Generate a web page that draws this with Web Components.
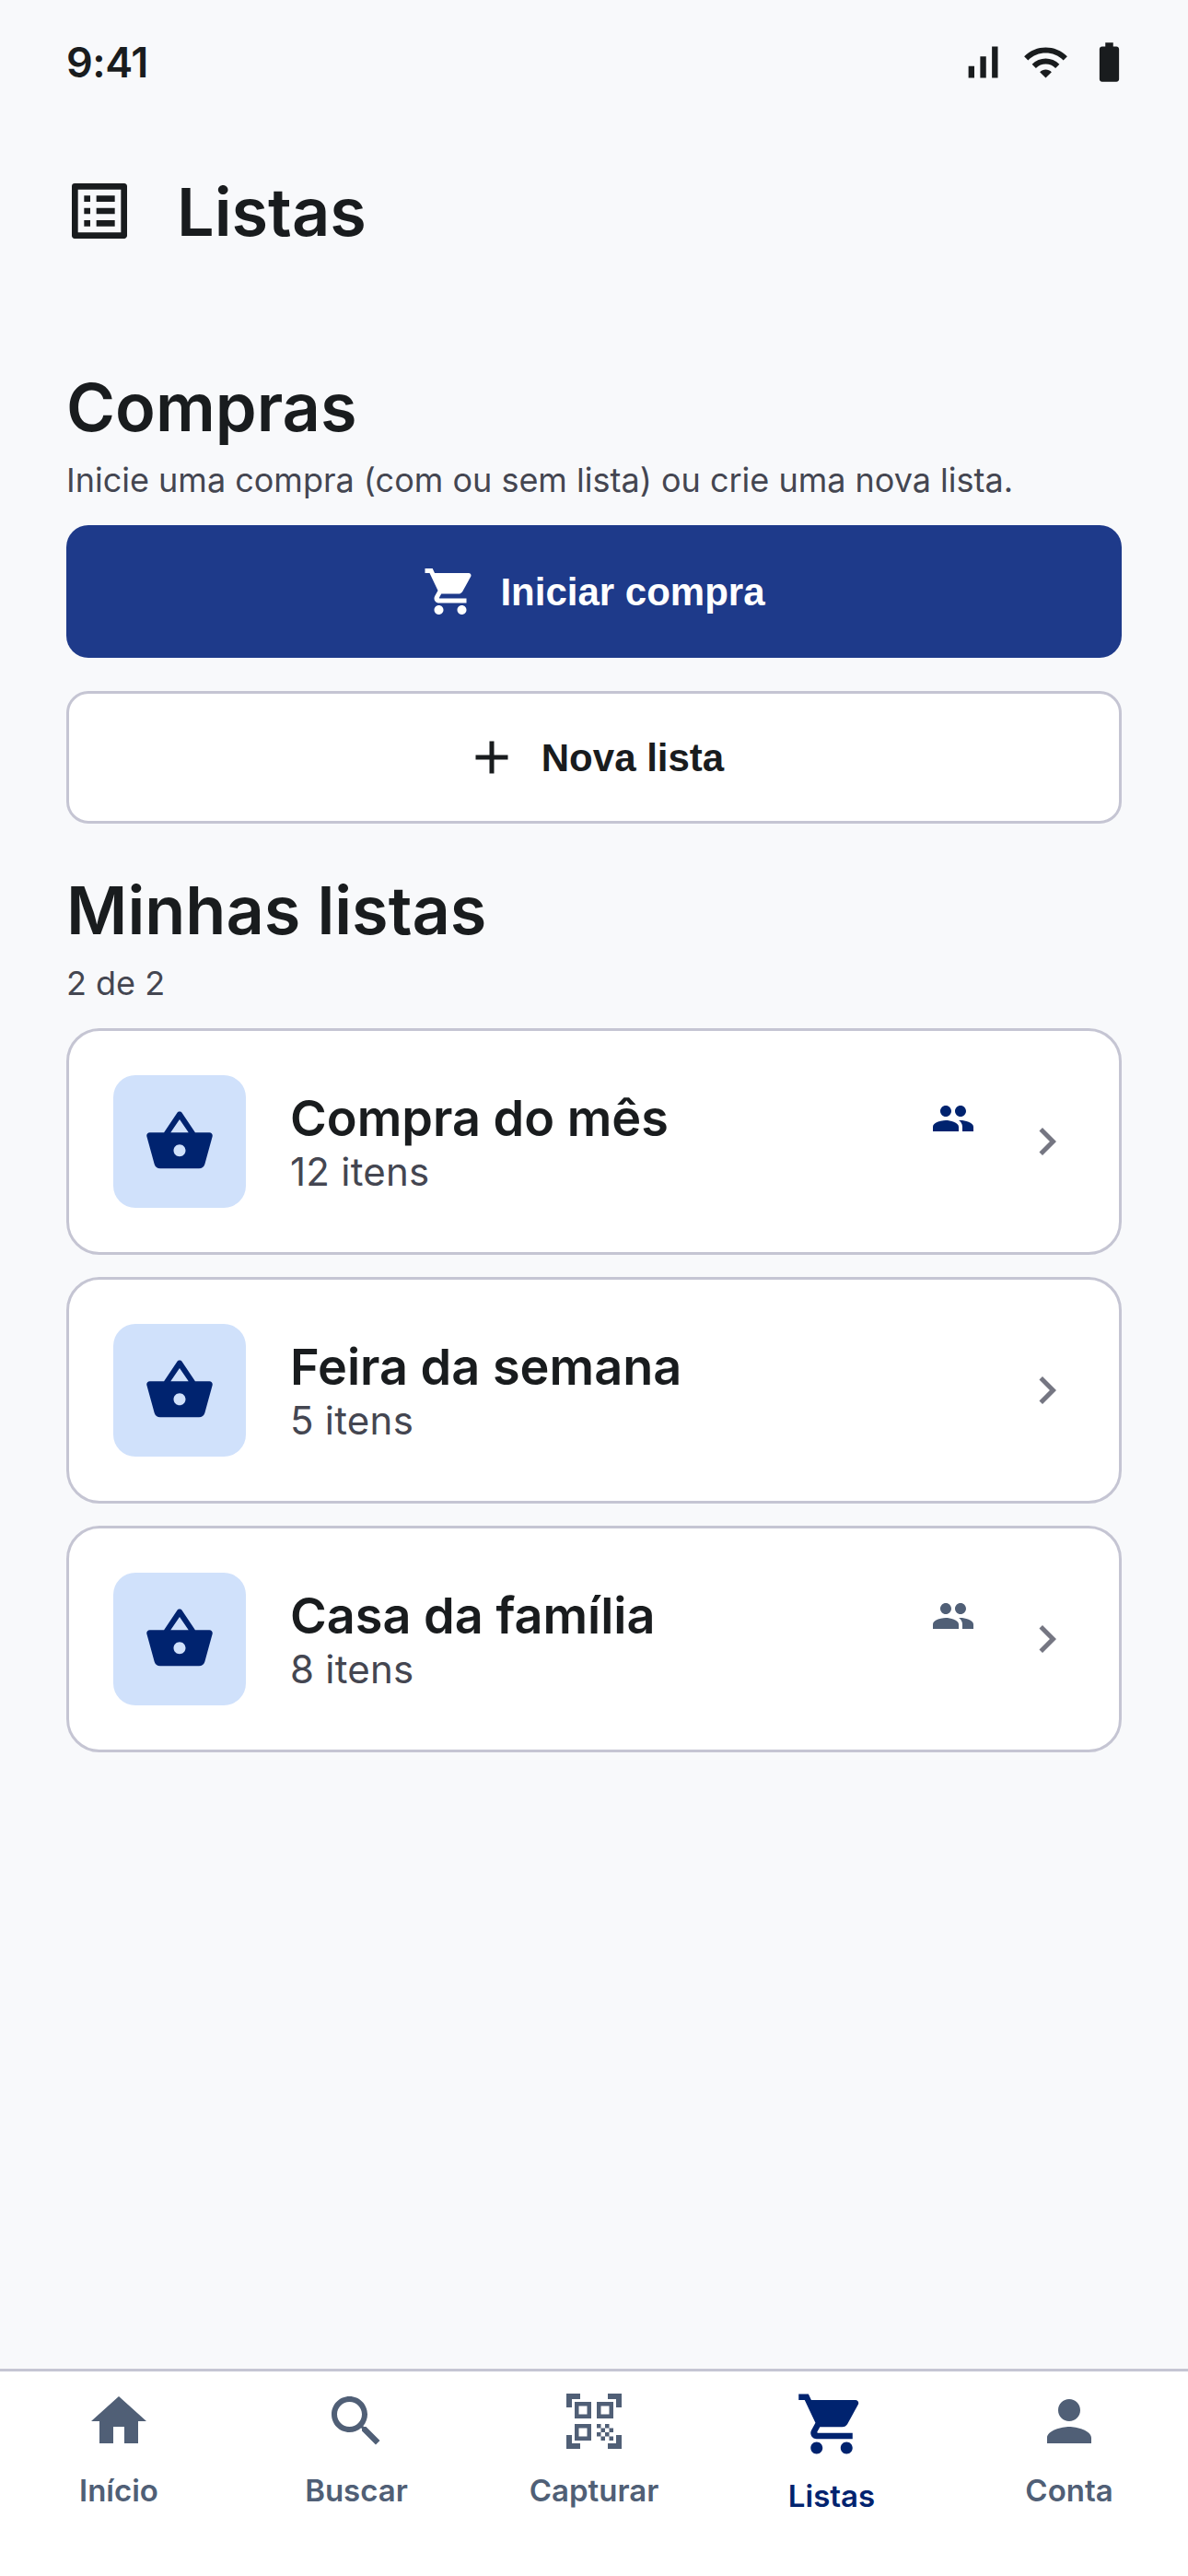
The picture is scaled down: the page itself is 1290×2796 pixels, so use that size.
<!DOCTYPE html>
<html lang="pt-BR">
<head>
<meta charset="utf-8">
<title>Listas</title>
<style>
    html, body { margin: 0; padding: 0; }
    body {
        background: #f8f9fb;
        color: #191c1e;
        font-family: Inter, "Noto Sans", sans-serif;
    }
    .page {
        display: flex;
        flex-direction: column;
        min-height: 2796px;
    }
    main {
        flex: 1;
        display: flex;
        flex-direction: column;
        padding: 0 72px;
    }
</style>
</head>
<body>
<div class="page">
    <status-bar></status-bar>
    <app-header>Listas</app-header>
    <main>
        <section-head sub="Inicie uma compra (com ou sem lista) ou crie uma nova lista.">Compras</section-head>
        <action-button icon="cart" kind="primary">Iniciar compra</action-button>
        <action-button icon="add">Nova lista</action-button>
        <section-head class="second" sub="2 de 2">Minhas listas</section-head>
        <list-card shared="primary"><span slot="title">Compra do mês</span><span slot="meta">12 itens</span></list-card>
        <list-card><span slot="title">Feira da semana</span><span slot="meta">5 itens</span></list-card>
        <list-card shared="secondary"><span slot="title">Casa da família</span><span slot="meta">8 itens</span></list-card>
    </main>
    <bottom-nav>
        <nav-item icon="home">Início</nav-item>
        <nav-item icon="search">Buscar</nav-item>
        <nav-item icon="qr">Capturar</nav-item>
        <nav-item icon="cart" active>Listas</nav-item>
        <nav-item icon="person">Conta</nav-item>
    </bottom-nav>
</div>

<script>
const ICONS = {
    signal: 'M17 4h3v16h-3zM5 14h3v6H5zm6-5h3v11h-3z',
    wifi: 'M1 9l2 2c4.97-4.97 13.03-4.97 18 0l2-2C16.93 2.93 7.08 2.93 1 9zm8 8l3 3 3-3c-1.65-1.66-4.34-1.66-6 0zm-4-4l2 2c2.76-2.76 7.24-2.76 10 0l2-2C15.14 9.14 8.87 9.14 5 13z',
    battery: 'M15.67 4H14V2h-4v2H8.33C7.6 4 7 4.6 7 5.33v15.33C7 21.4 7.6 22 8.33 22h7.33c.74 0 1.34-.6 1.34-1.33V5.33C17 4.6 16.4 4 15.67 4z',
    list: 'M19 5v14H5V5h14m1.1-2H3.9c-.5 0-.9.4-.9.9v16.2c0 .4.4.9.9.9h16.2c.4 0 .9-.5.9-.9V3.9c0-.5-.5-.9-.9-.9zM11 7h6v2h-6V7zm0 4h6v2h-6v-2zm0 4h6v2h-6zM7 7h2v2H7zm0 4h2v2H7zm0 4h2v2H7z',
    cart: 'M7 18c-1.1 0-1.99.9-1.99 2S5.9 22 7 22s2-.9 2-2-.9-2-2-2zM1 2v2h2l3.6 7.59-1.35 2.45c-.16.28-.25.61-.25.96 0 1.1.9 2 2 2h12v-2H7.42c-.14 0-.25-.11-.25-.25l.03-.12.9-1.63h7.45c.75 0 1.41-.41 1.75-1.03l3.58-6.48c.08-.14.12-.31.12-.48 0-.55-.45-1-1-1H5.21l-.94-2H1zm16 16c-1.1 0-1.99.9-1.99 2s.89 2 1.99 2 2-.9 2-2-.9-2-2-2z',
    add: 'M19 13h-6v6h-2v-6H5v-2h6V5h2v6h6v2z',
    basket: 'M17.21 9l-4.38-6.56c-.19-.28-.51-.42-.83-.42-.32 0-.64.14-.83.43L6.79 9H2c-.55 0-1 .45-1 1 0 .09.01.18.04.27l2.54 9.27c.23.84 1 1.46 1.92 1.46h13c.92 0 1.69-.62 1.93-1.46l2.54-9.27L23 10c0-.55-.45-1-1-1h-4.79zM9 9l3-4.4L15 9H9zm3 8c-1.1 0-2-.9-2-2s.9-2 2-2 2 .9 2 2-.9 2-2 2z',
    group: 'M16 11c1.66 0 2.99-1.34 2.99-3S17.66 5 16 5c-1.66 0-3 1.34-3 3s1.34 3 3 3zm-8 0c1.66 0 2.99-1.34 2.99-3S9.66 5 8 5C6.34 5 5 6.34 5 8s1.34 3 3 3zm0 2c-2.33 0-7 1.17-7 3.5V19h14v-2.5c0-2.33-4.67-3.5-7-3.5zm8 0c-.29 0-.62.02-.97.05 1.16.84 1.97 1.97 1.97 3.45V19h6v-2.5c0-2.33-4.67-3.5-7-3.5z',
    chevron: 'M10 6L8.59 7.41 13.17 12l-4.58 4.59L10 18l6-6z',
    home: 'M10 20v-6h4v6h5v-8h3L12 3 2 12h3v8z',
    search: 'M15.5 14h-.79l-.28-.27C15.41 12.59 16 11.11 16 9.5 16 5.91 13.09 3 9.5 3S3 5.91 3 9.5 5.91 16 9.5 16c1.61 0 3.09-.59 4.23-1.57l.27.28v.79l5 4.99L20.49 19l-4.99-5zm-6 0C7.01 14 5 11.99 5 9.5S7.01 5 9.5 5 14 7.01 14 9.5 11.99 14 9.5 14z',
    qr: 'M9.5 6.5v3h-3v-3h3M11 5H5v6h6V5zm-1.5 9.5v3h-3v-3h3M11 13H5v6h6v-6zm6.5-6.5v3h-3v-3h3M19 5h-6v6h6V5zm-6 8h1.5v1.5H13V13zm1.5 1.5H16V16h-1.5v-1.5zM16 13h1.5v1.5H16V13zm-3 3h1.5v1.5H13V16zm1.5 1.5H16V19h-1.5v-1.5zM16 16h1.5v1.5H16V16zm1.5-1.5H19V16h-1.5v-1.5zm0 3H19V19h-1.5v-1.5zM22 7h-2V4h-3V2h5v5zm0 15v-5h-2v3h-3v2h5zM2 22h5v-2H4v-3H2v5zM2 2v5h2V4h3V2H2z',
    person: 'M12 12c2.21 0 4-1.79 4-4s-1.79-4-4-4-4 1.79-4 4 1.79 4 4 4zm0 2c-2.67 0-8 1.34-8 4v2h16v-2c0-2.66-5.33-4-8-4z'
};

const svg = (name, size) =>
    `<svg width="${size}" height="${size}" viewBox="0 0 24 24" fill="currentColor"><path d="${ICONS[name]}"/></svg>`;

class StatusBar extends HTMLElement {
    connectedCallback() {
        this.attachShadow({ mode: 'open' });
        this.shadowRoot.innerHTML = `
            <style>
                :host {
                    display: flex;
                    align-items: center;
                    justify-content: space-between;
                    height: 52px;
                    padding: 41px 60px 41px 72px;
                    color: #191c1e;
                }
                .time { margin-top: 2px; font-size: 45px; font-weight: 600; line-height: 52px; letter-spacing: -0.5px; }
                .icons { display: flex; gap: 18px; }
                svg { display: block; }
            </style>
            <span class="time">9:41</span>
            <div class="icons">${svg('signal', 51)}${svg('wifi', 51)}${svg('battery', 51)}</div>
        `;
    }
}

class AppHeader extends HTMLElement {
    connectedCallback() {
        this.attachShadow({ mode: 'open' });
        this.shadowRoot.innerHTML = `
            <style>
                :host {
                    display: flex;
                    align-items: center;
                    gap: 44px;
                    padding: 55px 72px 0 68px;
                    height: 80px;
                    margin-bottom: 129px;
                    font-size: 72px;
                    font-weight: 600;
                }
                svg { display: block; flex: none; }
            </style>
            ${svg('list', 80)}
            <slot></slot>
        `;
    }
}

class SectionHead extends HTMLElement {
    connectedCallback() {
        this.attachShadow({ mode: 'open' });
        this.shadowRoot.innerHTML = `
            <style>
                :host { display: block; margin-bottom: 25px; }
                :host(.second) { margin-top: 14px; margin-bottom: 25px; }
                h2 { margin: 0; font-size: 72px; font-weight: 600; line-height: 88px; }
                p { margin: 11px 0 0; font-size: 36px; line-height: 48px; color: #444651; }
            </style>
            <h2><slot></slot></h2>
            <p>${this.getAttribute('sub')}</p>
        `;
    }
}

class ActionButton extends HTMLElement {
    connectedCallback() {
        this.attachShadow({ mode: 'open' });
        this.shadowRoot.innerHTML = `
            <style>
                :host {
                    display: flex;
                    align-items: center;
                    justify-content: center;
                    gap: 24px;
                    height: 144px;
                    box-sizing: border-box;
                    margin-bottom: 36px;
                    border: 3px solid #c5c5d3;
                    border-radius: 24px;
                    background: #fff;
                    color: #191c1e;
                    font-family: "Liberation Sans", Arial, sans-serif;
                    font-size: 42px;
                    font-weight: 700;
                }
                :host([kind="primary"]) {
                    border: 0;
                    background: #1e3a8a;
                    color: #fff;
                }
                .label { padding-top: 2px; }
                svg { display: block; }
            </style>
            ${svg(this.getAttribute('icon'), 60)}
            <div class="label"><slot></slot></div>
        `;
    }
}

class ListCard extends HTMLElement {
    connectedCallback() {
        const shared = this.getAttribute('shared');
        this.attachShadow({ mode: 'open' });
        this.shadowRoot.innerHTML = `
            <style>
                :host {
                    display: flex;
                    align-items: center;
                    gap: 48px;
                    box-sizing: border-box;
                    height: 246px;
                    padding: 48px;
                    margin-bottom: 24px;
                    border: 3px solid #c5c5d3;
                    border-radius: 36px;
                    background: #fff;
                }
                .thumb {
                    flex: none;
                    display: flex;
                    align-items: center;
                    justify-content: center;
                    width: 144px;
                    height: 144px;
                    border-radius: 24px;
                    background: #d0e1fb;
                    color: #00236f;
                }
                .text { flex: 1; min-width: 0; padding-top: 2px; }
                .top { display: flex; align-items: center; justify-content: space-between; }
                .title { font-size: 54px; font-weight: 600; line-height: 64px; color: #191c1e; }
                .meta { font-size: 42px; line-height: 52px; letter-spacing: 0.25px; color: #444651; }
                .shared { display: block; color: #00236f; }
                .shared.secondary { color: #505f76; }
                .chev { flex: none; display: block; color: #757682; }
                svg { display: block; }
            </style>
            <div class="thumb">${svg('basket', 78)}</div>
            <div class="text">
                <div class="top">
                    <div class="title"><slot name="title"></slot></div>
                    ${shared ? `<div class="shared ${shared}">${svg('group', 48)}</div>` : ''}
                </div>
                <div class="meta"><slot name="meta"></slot></div>
            </div>
            <div class="chev">${svg('chevron', 60)}</div>
        `;
    }
}

class BottomNav extends HTMLElement {
    connectedCallback() {
        this.attachShadow({ mode: 'open' });
        this.shadowRoot.innerHTML = `
            <style>
                :host {
                    display: grid;
                    grid-template-columns: repeat(5, 1fr);
                    height: 225px;
                    box-sizing: border-box;
                    padding-top: 18px;
                    border-top: 3px solid #c5c5d3;
                    background: #fff;
                }
            </style>
            <slot></slot>
        `;
    }
}

class NavItem extends HTMLElement {
    connectedCallback() {
        const active = this.hasAttribute('active');
        this.attachShadow({ mode: 'open' });
        this.shadowRoot.innerHTML = `
            <style>
                :host {
                    display: flex;
                    flex-direction: column;
                    align-items: center;
                    gap: 17px;
                    color: #505f76;
                    font-size: 33px;
                    font-weight: 600;
                    line-height: 44px;
                }
                :host([active]) { color: #00236f; }
                svg { display: block; }
            </style>
            ${svg(this.getAttribute('icon'), active ? 78 : 72)}
            <slot></slot>
        `;
    }
}

customElements.define('status-bar', StatusBar);
customElements.define('app-header', AppHeader);
customElements.define('section-head', SectionHead);
customElements.define('action-button', ActionButton);
customElements.define('list-card', ListCard);
customElements.define('bottom-nav', BottomNav);
customElements.define('nav-item', NavItem);
</script>
</body>
</html>
